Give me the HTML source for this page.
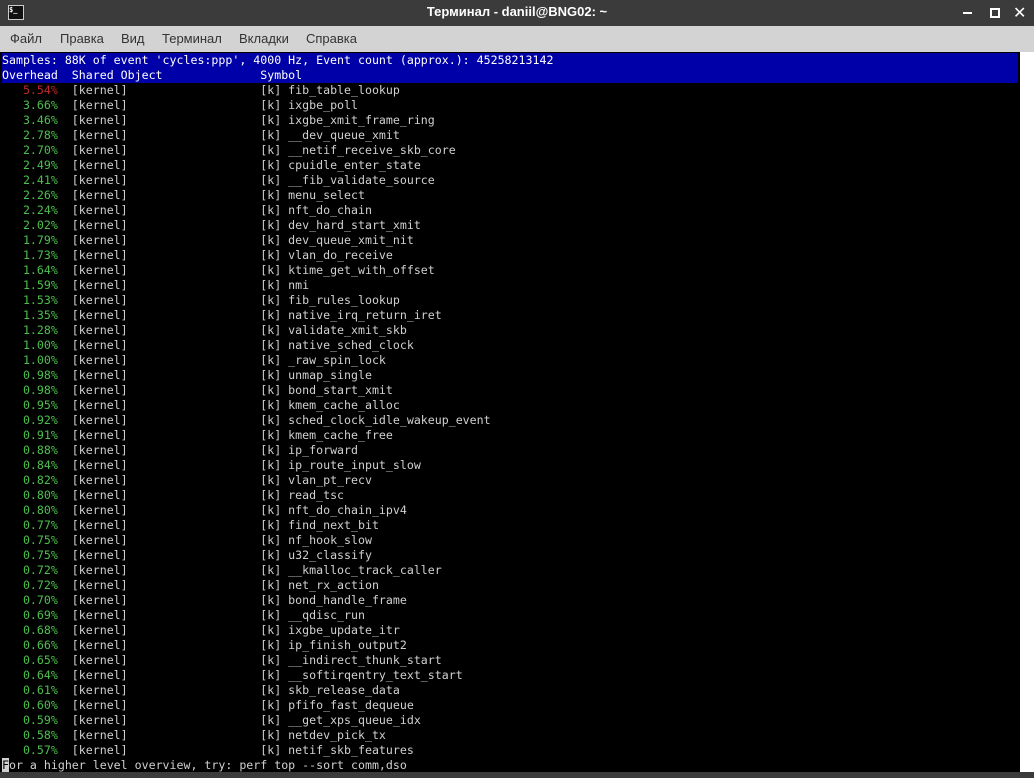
<!DOCTYPE html><html><head><meta charset="utf-8"><style>
html,body{margin:0;width:1034px;height:778px;overflow:hidden;background:#000}
#wrap{position:relative;width:1034px;height:778px;overflow:hidden;font-family:"Liberation Sans","DejaVu Sans",sans-serif}
#title{position:absolute;left:0;top:0;width:1034px;height:26px;background:#3b3b3b;color:#fff;font-size:13px;font-weight:bold;text-align:center;line-height:24px}
#menu{position:absolute;left:0;top:26px;width:1034px;height:26px;background:#d3d3d3;font-size:13px;color:#333;line-height:25px}
#menu span{position:absolute}
pre{margin:0;position:absolute;left:2px;top:53px;height:720px;overflow:hidden;font-family:"DejaVu Sans Mono",monospace;font-size:11.6px;line-height:15px;color:#d0d0d0}
.b{background:#0000a8;color:#fff;display:inline-block;width:1016px;margin-left:-2px;padding-left:2px}
.g{color:#4cc04c}.r{color:#c02828}
#sb{position:absolute;left:1020px;top:52px;width:14px;height:720px;background:#fff}
#th{position:absolute;left:1022px;top:54px;width:9px;height:714px;border:1px solid #999;border-radius:5px;background:#e6e6e6}
#bot{position:absolute;left:0;top:772px;width:1034px;height:6px;background:#3b3b3b}
.cur{background:#d0d0d0;color:#000}
</style></head><body><div id="wrap">
<div id="title">Терминал - daniil@BNG02: ~
<div style="position:absolute;left:8px;top:5px;width:14px;height:13px;border:1px solid #ccc;background:#111;font-size:7px;line-height:8px;text-align:left;font-family:monospace;color:#fff">$_</div>
<div style="position:absolute;left:963px;top:12px;width:9px;height:2px;background:#fff"></div>
<div style="position:absolute;left:990px;top:8px;width:6px;height:6px;border:2px solid #fff"></div>
<div style="position:absolute;left:1013px;top:2px;color:#fff;font-size:16px">✕</div>
</div>
<div id="menu"><span style="left:10px">Файл</span><span style="left:60px">Правка</span><span style="left:121px">Вид</span><span style="left:162px">Терминал</span><span style="left:239px">Вкладки</span><span style="left:306px">Справка</span></div>
<pre><span class="b">Samples: 88K of event 'cycles:ppp', 4000 Hz, Event count (approx.): 45258213142</span>
<span class="b">Overhead  Shared Object              Symbol</span>
<span class="r">   5.54%</span>  [kernel]                   [k] fib_table_lookup
<span class="g">   3.66%</span>  [kernel]                   [k] ixgbe_poll
<span class="g">   3.46%</span>  [kernel]                   [k] ixgbe_xmit_frame_ring
<span class="g">   2.78%</span>  [kernel]                   [k] __dev_queue_xmit
<span class="g">   2.70%</span>  [kernel]                   [k] __netif_receive_skb_core
<span class="g">   2.49%</span>  [kernel]                   [k] cpuidle_enter_state
<span class="g">   2.41%</span>  [kernel]                   [k] __fib_validate_source
<span class="g">   2.26%</span>  [kernel]                   [k] menu_select
<span class="g">   2.24%</span>  [kernel]                   [k] nft_do_chain
<span class="g">   2.02%</span>  [kernel]                   [k] dev_hard_start_xmit
<span class="g">   1.79%</span>  [kernel]                   [k] dev_queue_xmit_nit
<span class="g">   1.73%</span>  [kernel]                   [k] vlan_do_receive
<span class="g">   1.64%</span>  [kernel]                   [k] ktime_get_with_offset
<span class="g">   1.59%</span>  [kernel]                   [k] nmi
<span class="g">   1.53%</span>  [kernel]                   [k] fib_rules_lookup
<span class="g">   1.35%</span>  [kernel]                   [k] native_irq_return_iret
<span class="g">   1.28%</span>  [kernel]                   [k] validate_xmit_skb
<span class="g">   1.00%</span>  [kernel]                   [k] native_sched_clock
<span class="g">   1.00%</span>  [kernel]                   [k] _raw_spin_lock
<span class="g">   0.98%</span>  [kernel]                   [k] unmap_single
<span class="g">   0.98%</span>  [kernel]                   [k] bond_start_xmit
<span class="g">   0.95%</span>  [kernel]                   [k] kmem_cache_alloc
<span class="g">   0.92%</span>  [kernel]                   [k] sched_clock_idle_wakeup_event
<span class="g">   0.91%</span>  [kernel]                   [k] kmem_cache_free
<span class="g">   0.88%</span>  [kernel]                   [k] ip_forward
<span class="g">   0.84%</span>  [kernel]                   [k] ip_route_input_slow
<span class="g">   0.82%</span>  [kernel]                   [k] vlan_pt_recv
<span class="g">   0.80%</span>  [kernel]                   [k] read_tsc
<span class="g">   0.80%</span>  [kernel]                   [k] nft_do_chain_ipv4
<span class="g">   0.77%</span>  [kernel]                   [k] find_next_bit
<span class="g">   0.75%</span>  [kernel]                   [k] nf_hook_slow
<span class="g">   0.75%</span>  [kernel]                   [k] u32_classify
<span class="g">   0.72%</span>  [kernel]                   [k] __kmalloc_track_caller
<span class="g">   0.72%</span>  [kernel]                   [k] net_rx_action
<span class="g">   0.70%</span>  [kernel]                   [k] bond_handle_frame
<span class="g">   0.69%</span>  [kernel]                   [k] __qdisc_run
<span class="g">   0.68%</span>  [kernel]                   [k] ixgbe_update_itr
<span class="g">   0.66%</span>  [kernel]                   [k] ip_finish_output2
<span class="g">   0.65%</span>  [kernel]                   [k] __indirect_thunk_start
<span class="g">   0.64%</span>  [kernel]                   [k] __softirqentry_text_start
<span class="g">   0.61%</span>  [kernel]                   [k] skb_release_data
<span class="g">   0.60%</span>  [kernel]                   [k] pfifo_fast_dequeue
<span class="g">   0.59%</span>  [kernel]                   [k] __get_xps_queue_idx
<span class="g">   0.58%</span>  [kernel]                   [k] netdev_pick_tx
<span class="g">   0.57%</span>  [kernel]                   [k] netif_skb_features
<span class="cur">F</span>or a higher level overview, try: perf top --sort comm,dso</pre>
<div id="sb"><div id="th"></div></div>
<div id="bot"></div>
</div></body></html>
